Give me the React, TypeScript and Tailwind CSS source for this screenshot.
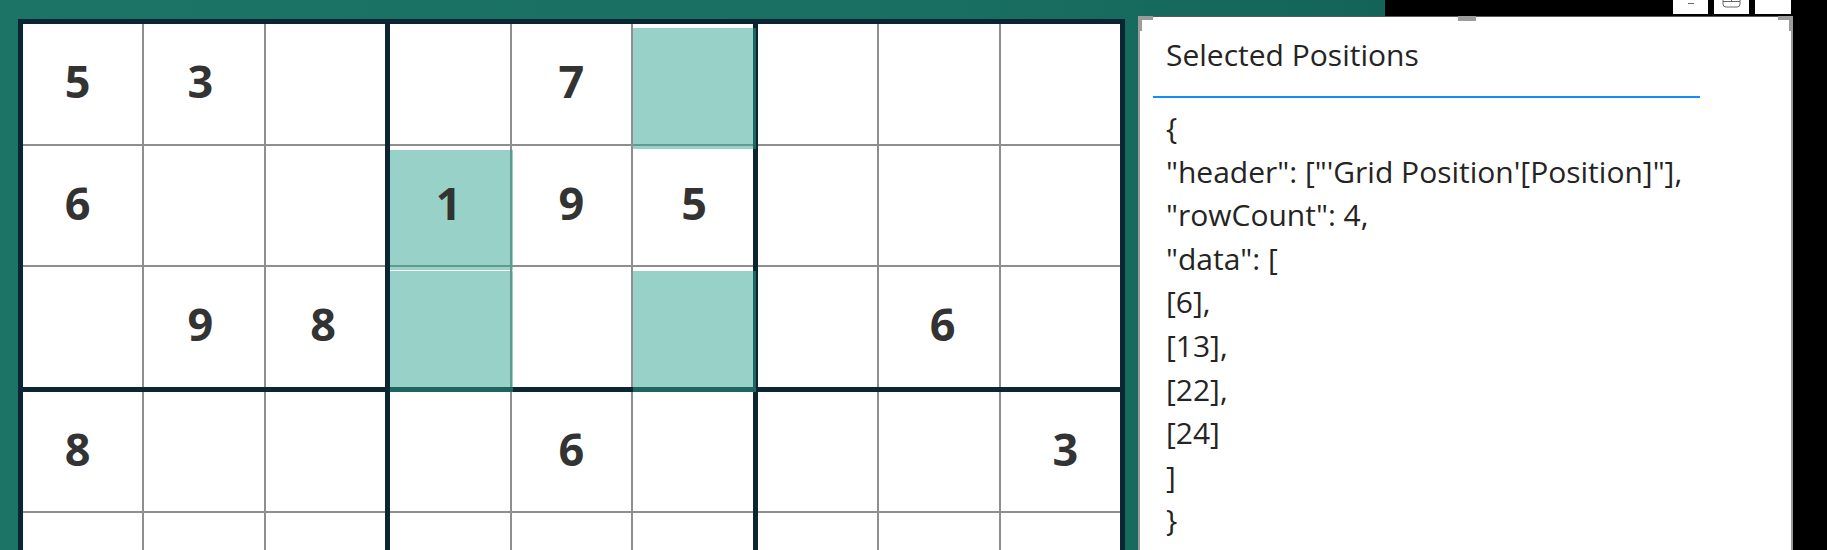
import React from 'react';

const puzzle = [
  '53..7....',
  '6..195...',
  '.98....6.',
  '8...6...3',
  '4..8.3..1',
  '7...2...6',
  '.6....28.',
  '...419..5',
  '....8..79',
];

// 1-based cell positions picked in the grid
const selected = [6, 13, 22, 24];

function Cell({ row, col }: { row: number; col: number }) {
  const ch = puzzle[row][col];
  const isSelected = selected.includes(row * 9 + col + 1);
  // the digit layer runs on a slightly wider pitch than the cell lines
  const shift = (col - 4) * 1.3;
  return (
    <div className="relative flex h-[119.5px] items-center justify-center bg-white pb-[6px]">
      {ch !== '.' && (
        <span
          className="relative z-20 text-[45px] font-bold leading-none text-[#333333]"
          style={{ transform: `translateX(${shift}px)` }}
        >
          {ch}
        </span>
      )}
      {isSelected && (
        <div className="absolute left-0 top-[4px] -right-[3px] -bottom-[5px] z-10 bg-[#31a38f]/50" />
      )}
    </div>
  );
}

function Box({ br, bc }: { br: number; bc: number }) {
  const cells = [];
  for (let r = 0; r < 3; r++) {
    for (let c = 0; c < 3; c++) {
      cells.push(<Cell key={`${r}-${c}`} row={br * 3 + r} col={bc * 3 + c} />);
    }
  }
  return <div className="grid grid-cols-3 gap-[2px] bg-[#8e8e8e]">{cells}</div>;
}

function SudokuGrid() {
  const boxes = [];
  for (let br = 0; br < 3; br++) {
    for (let bc = 0; bc < 3; bc++) {
      boxes.push(<Box key={`${br}-${bc}`} br={br} bc={bc} />);
    }
  }
  return (
    <div className="grid w-[1107px] grid-cols-3 gap-[5px] bg-[#0b2533] p-[5px]">{boxes}</div>
  );
}

const jsonLines = [
  '{',
  '"header": ["\'Grid Position\'[Position]"],',
  '"rowCount": 4,',
  '"data": [',
  '[6],',
  '[13],',
  '[22],',
  '[24]',
  ']',
  '}',
];

function HeaderButtons() {
  return (
    <div className="flex gap-[6px]">
      <div className="flex h-[14px] w-[35px] justify-center bg-white">
        <div className="mt-[3px] h-[1px] w-[6px] bg-[#666]" />
      </div>
      <div className="flex h-[14px] w-[35px] justify-center overflow-hidden bg-white">
        <svg width="19" height="8" viewBox="0 0 19 8">
          <path d="M1 -4 V4 a3 3 0 0 0 3 3 H15 a3 3 0 0 0 3 -3 V-4" fill="none" stroke="#666" strokeWidth="1" />
          <path d="M1 1.5 H18 M9.5 -4 V1.5" fill="none" stroke="#666" strokeWidth="1" />
        </svg>
      </div>
      <div className="h-[14px] w-[36px] bg-white" />
    </div>
  );
}

function PositionsPanel() {
  return (
    <div className="relative w-[655px] border-x-2 border-t border-x-[#9a9a9a] border-t-[#5a5a5a] bg-white pl-[13px] pt-[21px]">
      <div className="absolute -left-[2px] -top-[1px] h-[15px] w-[15px] border-l-[4px] border-t-[4px] border-[#9c9c9c]" />
      <div className="absolute left-[318px] -top-[1px] h-[5px] w-[18px] bg-[#9c9c9c]" />
      <div className="absolute -right-[2px] -top-[1px] h-[15px] w-[15px] border-r-[4px] border-t-[4px] border-[#9c9c9c]" />
      <div className="ml-[13px] text-[30px] leading-[34px] text-[#252423]">Selected Positions</div>
      <div className="mt-[24px] h-[2px] w-[547px] bg-[#118dff]" />
      <div className="ml-[13px] pt-[8px] text-[30px] leading-[43.6px] text-[#252423]">
        {jsonLines.map((line, i) => (
          <div key={i}>{line}</div>
        ))}
      </div>
    </div>
  );
}

export default function App() {
  return (
    <div
      className="flex h-[550px] w-[1827px] overflow-hidden bg-gradient-to-r from-[#1c7466] via-[#197062] to-[#0f5751]"
      style={{ fontFamily: '"Open Sans", "Noto Sans", sans-serif' }}
    >
      <div className="w-[1125px] shrink-0 pl-[18px] pt-[19px]">
        <SudokuGrid />
      </div>
      <div className="ml-[13px] flex flex-1 flex-col">
        <div className="flex h-[16px] shrink-0">
          <div className="w-[247px]" />
          <div className="flex flex-1 justify-end bg-black pr-[36px]">
            <HeaderButtons />
          </div>
        </div>
        <div className="flex flex-1">
          <PositionsPanel />
          <div className="flex-1 bg-black" />
        </div>
      </div>
    </div>
  );
}
